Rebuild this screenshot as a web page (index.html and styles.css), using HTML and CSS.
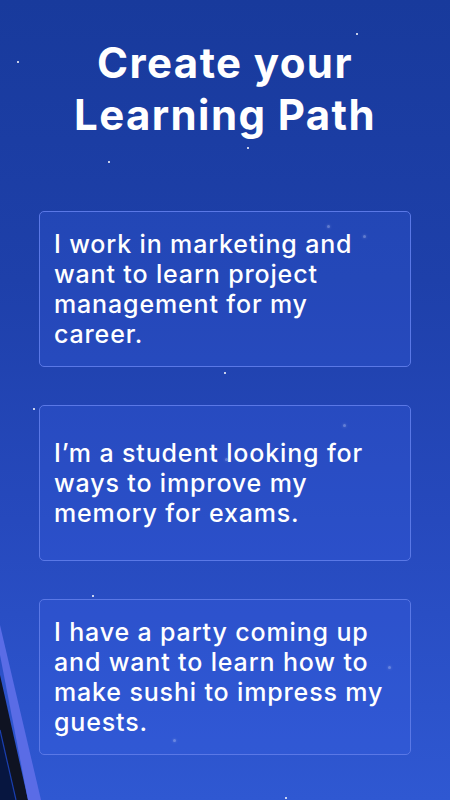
FILE: index.html
```html
<!DOCTYPE html>
<html>
<head>
<meta charset="utf-8">
<link rel="stylesheet" href="styles.css">
</head>
<body>
<div class="screen">
  <div class="stars">
    <span class="star" style="left:356px;top:33px"></span>
    <span class="star" style="left:17px;top:61px"></span>
    <span class="star" style="left:247px;top:147px"></span>
    <span class="star" style="left:108px;top:161px"></span>
    <span class="star" style="left:224px;top:372px"></span>
    <span class="star" style="left:33px;top:408px"></span>
    <span class="star" style="left:92px;top:595px"></span>
    <span class="star" style="left:285px;top:797px"></span>
    <span class="star faint" style="left:327px;top:225px"></span>
    <span class="star faint" style="left:363px;top:235px"></span>
    <span class="star faint" style="left:343px;top:424px"></span>
    <span class="star faint" style="left:225px;top:458px"></span>
    <span class="star faint" style="left:388px;top:666px"></span>
    <span class="star faint" style="left:173px;top:739px"></span>
  </div>
  <svg class="phone-edge" width="60" height="180" viewBox="0 0 60 180">
    <polygon points="0,55 0,180 28,180" fill="#0f1322"/>
    <polygon points="0,110 0,180 16,180" fill="#071640"/>
    <line x1="0" y1="110" x2="16" y2="180" stroke="#1a3fb0" stroke-width="1.2"/>
    <polygon points="0,5 0,35 28,180 41,180" fill="#5a6ce6"/>
  </svg>
  <h1 class="title">Create your<br>Learning Path</h1>
  <div class="cards">
    <div class="card"><p>I work in marketing and want to learn project management for my career.</p></div>
    <div class="card"><p>I’m a student looking for ways to improve my memory for exams.</p></div>
    <div class="card"><p>I have a party coming up and want to learn how to make sushi to impress my guests.</p></div>
  </div>
</div>
</body>
</html>
```
FILE: styles.css
```css
* { box-sizing: border-box; }
html, body { margin: 0; padding: 0; }
body {
  width: 450px;
  height: 800px;
  overflow: hidden;
  font-family: Inter, "Open Sans", sans-serif;
  color: #ffffff;
}
.screen {
  position: relative;
  width: 450px;
  height: 800px;
  background: linear-gradient(180deg, #183a9c 0%, #1e40aa 35%, #2649bd 65%, #2f58d2 100%);
  padding-top: 37px;
  overflow: hidden;
}
.stars { position: absolute; inset: 0; pointer-events: none; }
.star {
  position: absolute;
  width: 2px;
  height: 2px;
  border-radius: 50%;
  background: #ffffff;
}
.star.faint {
  width: 3px;
  height: 3px;
  background: rgba(255,255,255,0.35);
  box-shadow: 0 0 3px rgba(255,255,255,0.3);
}
.phone-edge {
  position: absolute;
  left: 0;
  bottom: 0;
}
.title {
  position: relative;
  margin: 0;
  text-align: center;
  font-size: 42px;
  line-height: 52px;
  font-weight: 700;
  letter-spacing: 1.4px;
}
.cards {
  position: relative;
  display: flex;
  flex-direction: column;
  gap: 38px;
  margin: 70px 39px 0;
}
.card {
  height: 156px;
  display: flex;
  align-items: center;
  padding: 0 14px;
  border: 1.5px solid #5a78e6;
  border-radius: 5px;
  background: rgba(60,100,235,0.22);
}
.card p {
  margin: 0;
  font-size: 25px;
  line-height: 30px;
  font-weight: 500;
  letter-spacing: 0.85px;
}
```
